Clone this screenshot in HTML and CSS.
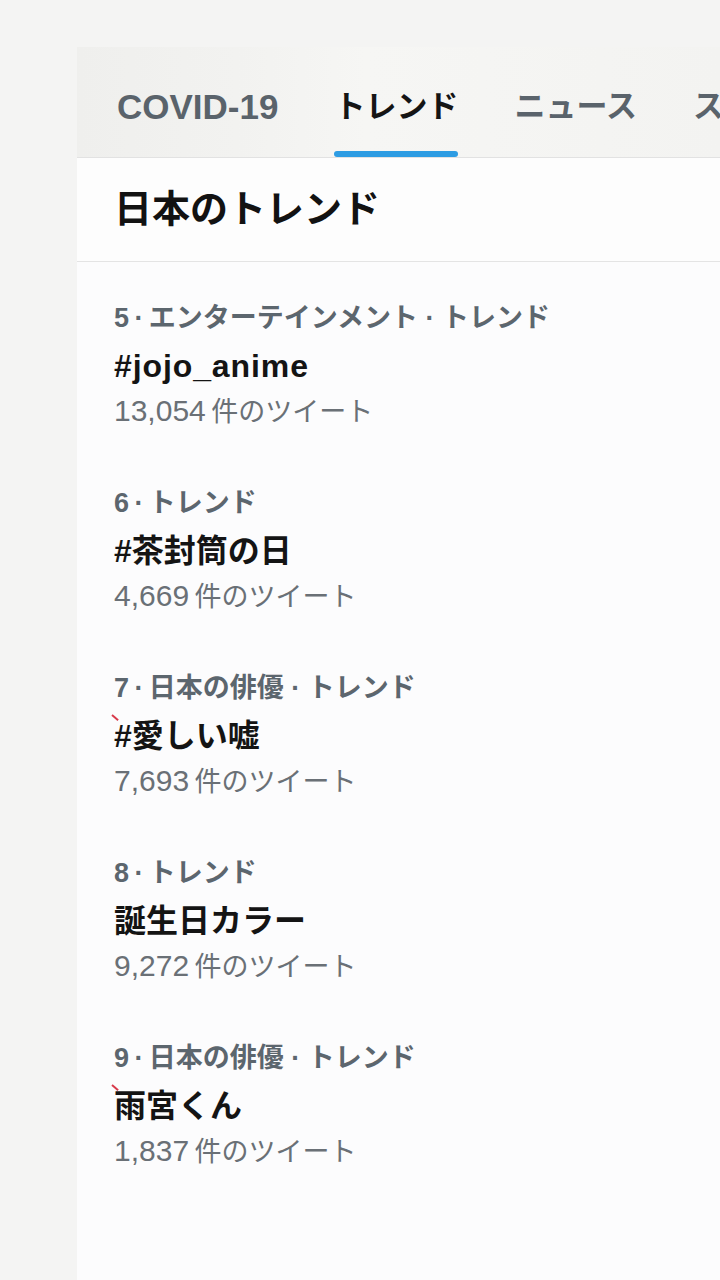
FILE: index.html
```html
<!DOCTYPE html>
<html lang="ja">
<head>
<meta charset="utf-8">
<title>トレンド</title>
<link rel="stylesheet" href="styles.css">
</head>
<body>
<div class="page">
  <div class="panel">
    <nav class="tabs">
      <div class="tab"><span class="tab-label en">COVID-19</span></div>
      <div class="tab active"><span class="tab-label">トレンド</span><span class="indicator"></span></div>
      <div class="tab"><span class="tab-label">ニュース</span></div>
      <div class="tab"><span class="tab-label">スポーツ</span></div>
    </nav>
    <header class="section-head">
      <h1>日本のトレンド</h1>
    </header>
    <ul class="trends">
      <li class="trend">
        <div class="meta">5&#8201;·&#8201;エンターテインメント · トレンド</div>
        <div class="title"><span class="en">#jojo_anime</span></div>
        <div class="count"><span class="num">13,054</span>&#8201;件のツイート</div>
      </li>
      <li class="trend">
        <div class="meta">6&#8201;·&#8201;トレンド</div>
        <div class="title">#茶封筒の日</div>
        <div class="count"><span class="num">4,669</span>&#8201;件のツイート</div>
      </li>
      <li class="trend">
        <div class="meta">7&#8201;·&#8201;日本の俳優 · トレンド</div>
        <div class="title"><span class="tick"></span>#愛しい嘘</div>
        <div class="count"><span class="num">7,693</span>&#8201;件のツイート</div>
      </li>
      <li class="trend">
        <div class="meta">8&#8201;·&#8201;トレンド</div>
        <div class="title">誕生日カラー</div>
        <div class="count"><span class="num">9,272</span>&#8201;件のツイート</div>
      </li>
      <li class="trend">
        <div class="meta">9&#8201;·&#8201;日本の俳優 · トレンド</div>
        <div class="title"><span class="tick"></span>雨宮くん</div>
        <div class="count"><span class="num">1,837</span>&#8201;件のツイート</div>
      </li>
    </ul>
  </div>
</div>
</body>
</html>
```

FILE: styles.css
```css
html, body {
  margin: 0;
  padding: 0;
  background: #f4f4f3;
}

body {
  font-family: "Liberation Sans", "Noto Sans CJK JP", sans-serif;
  width: 720px;
  height: 1280px;
  overflow: hidden;
}

.page {
  padding: 47px 0 0 77px;
}

.panel {
  width: 643px;
  height: 1233px;
  background: #fcfcfd;
  overflow: hidden;
}

.tabs {
  display: flex;
  gap: 56px;
  height: 110px;
  padding-left: 40px;
  background: linear-gradient(90deg, #efefed 0%, #f2f2f0 25%, #f6f6f4 45%, #f3f3f1 100%);
  border-bottom: 1px solid #e2e2e2;
  white-space: nowrap;
}

.tab {
  display: flex;
  flex-direction: column;
  align-items: stretch;
  padding-top: 40px;
  flex-shrink: 0;
}

.tab-label {
  font-size: 31px;
  line-height: 40px;
  font-weight: 700;
  color: #5a636b;
}

.tab-label.en {
  font-size: 35px;
}

.tab.active .tab-label {
  color: #151515;
}

.indicator {
  display: block;
  height: 6px;
  margin-top: 24px;
  border-radius: 3px;
  background: #2d9ce3;
}

.section-head {
  background: #fdfdfd;
  border-bottom: 1px solid #e4e4e4;
  padding: 27px 0 28px 37px;
}

.section-head h1 {
  margin: 0;
  font-size: 38px;
  line-height: 48px;
  font-weight: 700;
  color: #121212;
}

.trends {
  list-style: none;
  margin: 0;
  padding: 0;
}

.trend {
  padding: 38px 0 18px 37px;
  height: 129px;
}

.meta {
  font-size: 27px;
  line-height: 36px;
  font-weight: 700;
  color: #5c666e;
}

.title {
  position: relative;
  margin-top: 10px;
  font-size: 32px;
  line-height: 40px;
  font-weight: 700;
  color: #141414;
}

.title .en {
  letter-spacing: 0.9px;
}

.count {
  margin-top: 7px;
  font-size: 27px;
  line-height: 36px;
  color: #6a7076;
}

.count .num {
  font-size: 30px;
}

.tick {
  position: absolute;
  left: -2px;
  top: -2px;
  width: 8px;
  height: 2px;
  background: #d83a4a;
  transform: rotate(40deg);
  transform-origin: left center;
}
```
